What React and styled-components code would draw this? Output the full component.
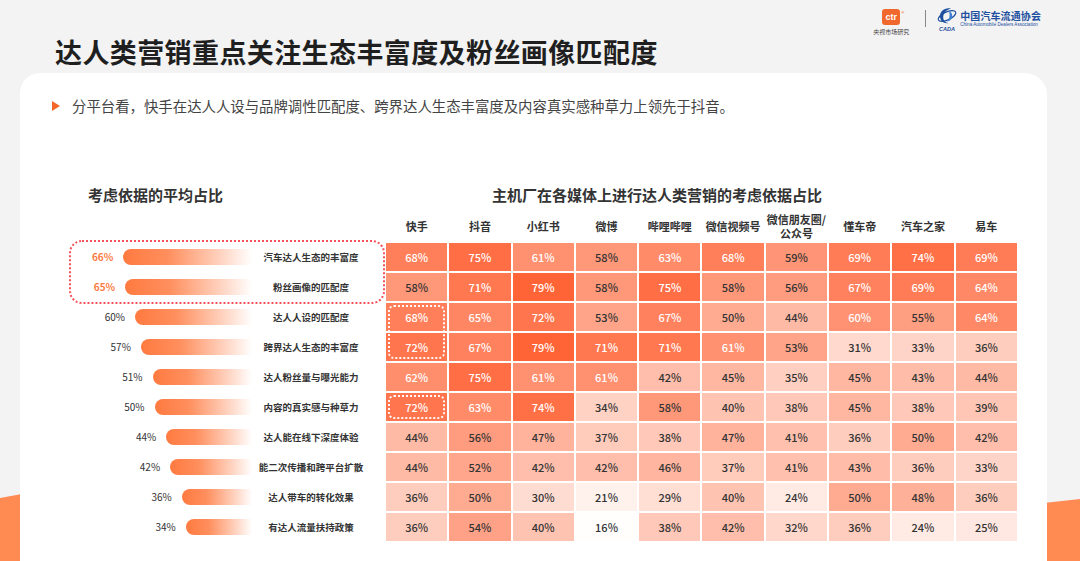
import React from 'react'
import styled, { createGlobalStyle } from 'styled-components'

const GlobalStyle = createGlobalStyle`
    html, body {
        margin: 0;
        padding: 0;
    }
    body {
        background: #f3f3f3;
        font-family: "Noto Sans CJK SC", "Noto Sans", sans-serif;
        color: #333;
    }
`

const platforms = [
    '快手',
    '抖音',
    '小红书',
    '微博',
    '哔哩哔哩',
    '微信视频号',
    '微信朋友圈/\n公众号',
    '懂车帝',
    '汽车之家',
    '易车',
]

const rows = [
    { name: '汽车达人生态的丰富度', avg: 66, values: [68, 75, 61, 58, 63, 68, 59, 69, 74, 69] },
    { name: '粉丝画像的匹配度', avg: 65, values: [58, 71, 79, 58, 75, 58, 56, 67, 69, 64] },
    { name: '达人人设的匹配度', avg: 60, values: [68, 65, 72, 53, 67, 50, 44, 60, 55, 64] },
    { name: '跨界达人生态的丰富度', avg: 57, values: [72, 67, 79, 71, 71, 61, 53, 31, 33, 36] },
    { name: '达人粉丝量与曝光能力', avg: 51, values: [62, 75, 61, 61, 42, 45, 35, 45, 43, 44] },
    { name: '内容的真实感与种草力', avg: 50, values: [72, 63, 74, 34, 58, 40, 38, 45, 38, 39] },
    { name: '达人能在线下深度体验', avg: 44, values: [44, 56, 47, 37, 38, 47, 41, 36, 50, 42] },
    { name: '能二次传播和跨平台扩散', avg: 42, values: [44, 52, 42, 42, 46, 37, 41, 43, 36, 33] },
    { name: '达人带车的转化效果', avg: 36, values: [36, 50, 30, 21, 29, 40, 24, 50, 48, 36] },
    { name: '有达人流量扶持政策', avg: 34, values: [36, 54, 40, 16, 38, 42, 32, 36, 24, 25] },
]

// heat colour: white at 16% -> deep orange at 79%
const heat = (v) => {
    const t = Math.max(0, Math.min(1, (v - 16) / 63))
    const g = Math.round(254 - 154 * t)
    const b = Math.round(253 - 198 * t)
    return `rgb(255, ${g}, ${b})`
}

const Page = styled.div`
    position: relative;
    width: 1080px;
    height: 561px;
    overflow: hidden;
    background: #f3f3f3;
`

const CornerLeft = styled.div`
    position: absolute;
    left: 0;
    bottom: 0;
    width: 22px;
    height: 67px;
    background: #ff8a52;
    clip-path: polygon(0 4px, 100% 0, 100% 100%, 0 100%);
`

const CornerRight = styled.div`
    position: absolute;
    right: 0;
    bottom: 0;
    width: 36px;
    height: 62px;
    background: #ff8a52;
    clip-path: polygon(0 4px, 100% 0, 100% 100%, 0 100%);
`

const Header = styled.header`
    display: flex;
    justify-content: space-between;
    align-items: flex-start;
    height: 73px;
    padding: 0 39px 0 55px;
    box-sizing: border-box;
`

const Title = styled.h1`
    margin: 0;
    padding-top: 35px;
    font-size: 27px;
    line-height: 34px;
    font-weight: 700;
    letter-spacing: 0.4px;
    color: #1f1f1f;
`

const Logos = styled.div`
    display: flex;
    align-items: flex-start;
    padding-top: 6px;
`

const CtrLogo = styled.div`
    display: flex;
    flex-direction: column;
    align-items: center;
    width: 32px;
`

const CtrMark = styled.div`
    position: relative;
    width: 18px;
    height: 16px;
    margin-top: 3px;
    border-radius: 3px;
    background: #f0682c;
    color: #fff;
    font-family: "Liberation Sans", sans-serif;
    font-weight: 700;
    font-size: 9px;
    line-height: 16px;
    text-align: center;
    &::after {
        content: '®';
        position: absolute;
        right: -4px;
        top: -4px;
        font-size: 4px;
        color: #f0682c;
    }
`

const CtrText = styled.span`
    margin-top: 3px;
    font-size: 6px;
    line-height: 8px;
    white-space: nowrap;
    color: #444;
`

const Divider = styled.span`
    width: 1px;
    height: 17px;
    margin: 4px 10px 0 18px;
    background: #888;
`

const CadaLogo = styled.div`
    display: flex;
    align-items: flex-start;
    gap: 2px;
`

const CadaText = styled.div`
    display: flex;
    flex-direction: column;
    padding-top: 3px;
`

const CadaName = styled.span`
    font-family: "Noto Sans CJK SC", serif;
    font-size: 10px;
    line-height: 13px;
    font-weight: 700;
    color: #1d4f9f;
    letter-spacing: 0.1px;
`

const CadaEn = styled.span`
    font-family: "Liberation Sans", sans-serif;
    font-size: 4.6px;
    line-height: 6px;
    color: #1d4f9f;
    white-space: nowrap;
`

const Card = styled.main`
    position: relative;
    z-index: 1;
    margin-left: 20px;
    width: 1027px;
    height: 488px;
    padding: 23px 0 0 32px;
    box-sizing: border-box;
    background: #fff;
    border-radius: 20px 22px 0 0;
`

const Lead = styled.p`
    display: flex;
    align-items: center;
    gap: 12px;
    margin: 0;
    font-size: 14.4px;
    line-height: 20px;
    color: #444;
`

const Arrow = styled.span`
    width: 0;
    height: 0;
    border-left: 8px solid #f4672a;
    border-top: 5px solid transparent;
    border-bottom: 5px solid transparent;
`

const ChartArea = styled.section`
    display: flex;
    gap: 4px;
    margin: 69px 0 0 20px;
`

const LeftPanel = styled.div`
    display: flex;
    flex-direction: column;
    width: 310px;
`

const PanelTitle = styled.h2`
    margin: 0 0 5px;
    padding-left: ${(p) => p.$indent}px;
    font-size: 15px;
    line-height: 20px;
    font-weight: 700;
    color: #333;
`

const HeaderSpacer = styled.div`
    height: 33px;
`

const BarList = styled.div`
    display: flex;
    flex-direction: column;
    gap: 2px;
`

const Highlight = styled.div`
    display: flex;
    flex-direction: column;
    gap: 2px;
    outline: 2px dotted #f5525a;
    outline-offset: 1px;
    border-radius: 10px;
`

const BarRow = styled.div`
    display: grid;
    grid-template-columns: 180px 118px;
    align-items: center;
    height: 28px;
`

const BarCell = styled.div`
    display: flex;
    justify-content: flex-end;
    align-items: center;
    gap: 10px;
`

const Pct = styled.span`
    font-size: 10px;
    line-height: 12px;
    font-weight: ${(p) => (p.$hot ? 700 : 400)};
    color: ${(p) => (p.$hot ? '#ff7a42' : '#333')};
`

const Bar = styled.div`
    height: 16px;
    border-radius: 8px 0 0 8px;
    background: linear-gradient(90deg, #ff7a40 0%, #ff8f5e 35%, #ffd2bf 75%, #ffffff 100%);
`

const BarLabel = styled.span`
    text-align: center;
    font-size: 9.5px;
    line-height: 12px;
    font-weight: 700;
    color: #333;
    white-space: nowrap;
`

const RightPanel = styled.div`
    display: flex;
    flex-direction: column;
`

const Grid = styled.div`
    display: grid;
    grid-template-columns: repeat(10, 61.3px);
    grid-template-rows: 31px repeat(10, 28px);
    gap: 2px;
`

const HeadCell = styled.div`
    grid-row: 1;
    grid-column: ${(p) => p.$col};
    display: flex;
    align-items: center;
    justify-content: center;
    text-align: center;
    white-space: pre-line;
    font-size: 11px;
    line-height: 14px;
    font-weight: 700;
    color: #333;
`

const Cell = styled.div`
    grid-row: ${(p) => p.$row};
    grid-column: ${(p) => p.$col};
    display: flex;
    align-items: center;
    justify-content: center;
    font-size: 11px;
    font-weight: 500;
    color: ${(p) => (p.$light ? '#fff' : '#333')};
`

const CellMark = styled.div`
    grid-row: ${(p) => p.$row} / span ${(p) => p.$span};
    grid-column: ${(p) => p.$col};
    z-index: 1;
    margin: 2px;
    border: 2px dotted rgba(255, 255, 255, 0.95);
    border-radius: 6px;
`

function CadaMark() {
    return (
        <svg width="22" height="27" viewBox="0 0 22 27">
            <ellipse cx="11" cy="10" rx="9.5" ry="4" fill="none" stroke="#1d4f9f" strokeWidth="1.2" transform="rotate(-25 11 10)" />
            <path d="M15 2.5 C9 1 3.5 5 4 11 C4.5 15.5 8.5 18 12.5 17 C8 16.5 6.5 12.5 7.5 9 C8.5 5.5 11.5 3.5 15 2.5 Z" fill="#1d4f9f" />
            <path d="M13 5 C16 6 17 9.5 15.5 12.5 C14.5 14.5 12.5 15.5 10.5 15.5 C13 14 14.5 11 13 5 Z" fill="#3b7fd0" />
            <text x="11" y="24.5" textAnchor="middle" fontFamily="Liberation Sans, sans-serif" fontSize="5.5" fontStyle="italic" fontWeight="700" fill="#1d4f9f">CADA</text>
        </svg>
    )
}

function BarItem({ row, hot }) {
    return (
        <BarRow>
            <BarCell>
                <Pct $hot={hot}>{`${row.avg}%`}</Pct>
                <Bar style={{ width: `${row.avg * 1.95}px` }} />
            </BarCell>
            <BarLabel>{row.name}</BarLabel>
        </BarRow>
    )
}

export default function App() {
    return (
        <>
            <GlobalStyle />
            <Page>
                <CornerLeft />
                <CornerRight />
                <Header>
                    <Title>达人类营销重点关注生态丰富度及粉丝画像匹配度</Title>
                    <Logos>
                        <CtrLogo>
                            <CtrMark>ctr</CtrMark>
                            <CtrText>央视市场研究</CtrText>
                        </CtrLogo>
                        <Divider />
                        <CadaLogo>
                            <CadaMark />
                            <CadaText>
                                <CadaName>中国汽车流通协会</CadaName>
                                <CadaEn>China Automobile Dealers Association</CadaEn>
                            </CadaText>
                        </CadaLogo>
                    </Logos>
                </Header>
                <Card>
                    <Lead>
                        <Arrow />
                        分平台看，快手在达人人设与品牌调性匹配度、跨界达人生态丰富度及内容真实感种草力上领先于抖音。
                    </Lead>
                    <ChartArea>
                        <LeftPanel>
                            <PanelTitle $indent={16}>考虑依据的平均占比</PanelTitle>
                            <HeaderSpacer />
                            <BarList>
                                <Highlight>
                                    {rows.slice(0, 2).map((row) => (
                                        <BarItem key={row.name} row={row} hot />
                                    ))}
                                </Highlight>
                                {rows.slice(2).map((row) => (
                                    <BarItem key={row.name} row={row} />
                                ))}
                            </BarList>
                        </LeftPanel>
                        <RightPanel>
                            <PanelTitle $indent={106}>主机厂在各媒体上进行达人类营销的考虑依据占比</PanelTitle>
                            <Grid>
                                {platforms.map((p, i) => (
                                    <HeadCell key={p} $col={i + 1}>
                                        {p}
                                    </HeadCell>
                                ))}
                                {rows.map((row, r) =>
                                    row.values.map((v, c) => (
                                        <Cell
                                            key={`${r}-${c}`}
                                            $row={r + 2}
                                            $col={c + 1}
                                            $light={v >= 60}
                                            style={{ background: heat(v) }}
                                        >
                                            {`${v}%`}
                                        </Cell>
                                    ))
                                )}
                                <CellMark $row={4} $span={2} $col={1} />
                                <CellMark $row={7} $span={1} $col={1} />
                            </Grid>
                        </RightPanel>
                    </ChartArea>
                </Card>
            </Page>
        </>
    )
}
